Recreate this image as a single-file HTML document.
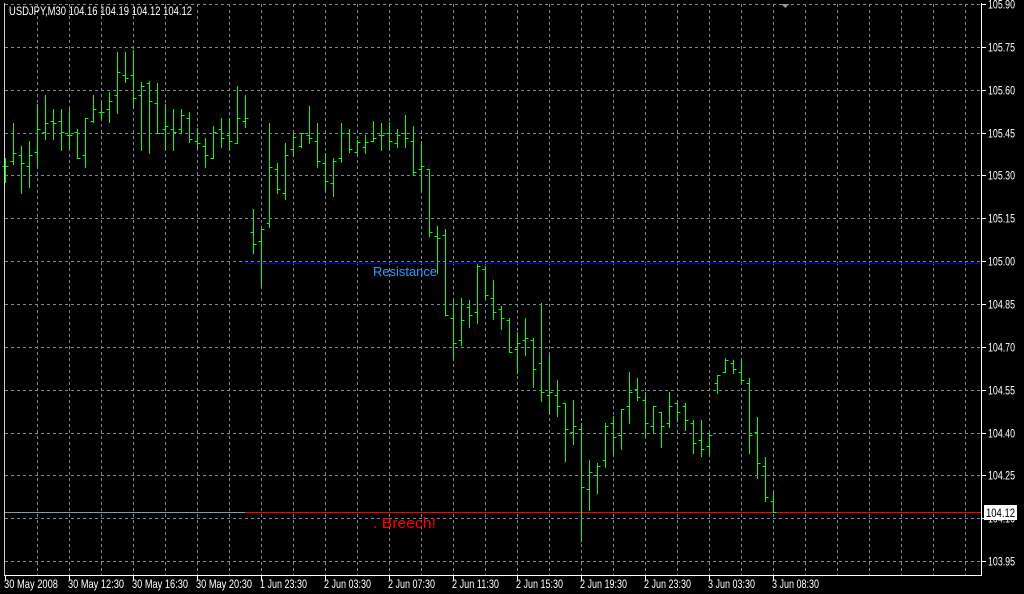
<!DOCTYPE html>
<html><head><meta charset="utf-8"><style>
html,body{margin:0;padding:0;background:#000;width:1024px;height:594px;overflow:hidden}
svg{display:block}
text{font-family:"Liberation Sans",sans-serif;font-size:12px;fill:#fff}
</style></head><body>
<svg id="c" width="1024" height="594" viewBox="0 0 1024 594" shape-rendering="crispEdges">
<rect width="1024" height="594" fill="#000"/>
<g id="grid" stroke="#77889a" stroke-width="1" stroke-dasharray="3,3"></g>
<line x1="245" y1="263.5" x2="982" y2="263.5" stroke="#0000cc"/>
<line x1="4" y1="512.5" x2="245" y2="512.5" stroke="#8899aa"/>
<line x1="245" y1="512.5" x2="982" y2="512.5" stroke="#ff0000"/>
<g id="bars" stroke="#00ff00" stroke-width="1"></g>
<polygon points="781,4 789,4 785,8" fill="#8899aa"/>
<line x1="4.5" y1="3" x2="4.5" y2="576" stroke="#ccc"/>
<line x1="981.5" y1="3" x2="981.5" y2="576" stroke="#fff"/>
<line x1="4" y1="575.5" x2="982" y2="575.5" stroke="#fff"/>
<g id="axis"></g>
<text x="9" y="15" textLength="183" lengthAdjust="spacingAndGlyphs">USDJPY,M30  104.16 104.19 104.12 104.12</text>
<text x="373" y="276" textLength="64" lengthAdjust="spacingAndGlyphs" style="fill:#3399ff;font-size:13px">Resistance</text>
<text x="373" y="528" textLength="63" lengthAdjust="spacingAndGlyphs" style="fill:#ff0000;font-size:15px">. Breech!</text>
<rect x="984" y="505" width="33" height="15" fill="#fff"/>
<text x="986" y="517" textLength="29" lengthAdjust="spacingAndGlyphs" style="fill:#000">104.12</text>
</svg>
<script>
var NS="http://www.w3.org/2000/svg";
function el(p,t,a,txt){var e=document.createElementNS(NS,t);for(var k in a)e.setAttribute(k,a[k]);if(txt)e.textContent=txt;p.appendChild(e);return e;}
var g=document.getElementById('grid'),ax=document.getElementById('axis'),b=document.getElementById('bars');
var prices=["105.90","105.75","105.60","105.45","105.30","105.15","105.00","104.85","104.70","104.55","104.40","104.25","104.10","103.95"];
for(var k=0;k<14;k++){var y=Math.round(4+42.85*k)+0.5;
 el(g,'line',{x1:5,y1:y,x2:981,y2:y});
 el(ax,'line',{x1:982,y1:y,x2:986,y2:y,stroke:'#fff'});
 el(ax,'text',{x:988,y:y+4,textLength:27,lengthAdjust:'spacingAndGlyphs'},prices[k]);
}
for(var x=37;x<982;x+=32){el(g,'line',{x1:x+0.5,y1:4,x2:x+0.5,y2:575});}
var labels=["30 May 2008","30 May 12:30","30 May 16:30","30 May 20:30","1 Jun 23:30","2 Jun 03:30","2 Jun 07:30","2 Jun 11:30","2 Jun 15:30","2 Jun 19:30","2 Jun 23:30","3 Jun 03:30","3 Jun 08:30"];
for(var i=0;i<labels.length;i++){var tx=5+64*i;var L=labels[i];
 var w=L.indexOf("May")>=0?(i==0?54:56):47;
 el(ax,'line',{x1:tx+0.5,y1:575,x2:tx+0.5,y2:580,stroke:'#fff'});
 el(ax,'text',{x:tx-1,y:588,textLength:w,lengthAdjust:'spacingAndGlyphs'},L);}
var d=[[158,182,166,166],[123,164,161,153],[146,193,155,163],[141,187,166,155],[104,166,152,129],[95,139,132,123],[109,139,121,123],[109,150,121,132],[109,148,135,135],[129,158,132,158],[118,167,155,118],[95,122,121,109],[103,119,112,112],[92,122,109,101],[52,113,95,72],[52,82,75,78],[50,107,75,98],[82,150,95,86],[81,153,83,101],[83,133,103,133],[104,149,129,126],[109,150,129,132],[109,133,129,115],[112,142,118,139],[128,148,141,143],[138,167,146,155],[126,158,158,132],[118,147,129,138],[118,150,135,141],[86,143,143,118],[95,127,121,118],
[209,253,232,244],[229,285,241,229],[123,227,223,167],[163,193,169,189],[143,199,193,155],[134,156,149,137],[133,147,146,133],[106,143,135,138],[123,167,141,161],[153,190,163,181],[158,196,183,161],[123,162,158,133],[129,152,133,149],[140,153,152,142],[135,153,147,142],[121,141,141,138],[123,150,135,135],[122,149,133,141],[129,147,143,135],[115,147,133,138],[126,175,141,172],[141,190,169,166],[169,236,169,232],[226,273,236,238],[229,315,235,315],[300,360,318,343],[298,345,340,320],[300,327,307,315],[264,323,312,266],[266,298,269,295],[280,319,298,312],
[306,329,309,318],[318,352,320,352],[332,373,349,343],[318,355,340,338],[338,387,340,369],[303,401,363,392],[355,413,395,392],[380,416,395,406],[403,461,403,429],[400,444,432,426],[423,541,429,487],[460,510,489,472],[463,493,475,466],[423,467,460,426],[416,454,423,437],[409,449,435,409],[372,423,406,392],[378,400,389,397],[392,437,400,423],[406,432,426,406],[412,447,412,426],[392,427,423,406],[403,421,403,412],[403,430,406,420],[420,453,423,443],[420,456,440,449],[433,454,446,435],[375,393,383,375],[358,372,372,360],[360,373,363,369],[360,383,372,380],[378,453,383,435],[417,478,432,463],[457,501,466,497],[492,512,501,512]];
for(var i=0;i<d.length;i++){var x=5+8*i+0.5,r=d[i];
 el(b,'line',{x1:x,y1:r[0],x2:x,y2:r[1]+1});
 el(b,'line',{x1:x-3,y1:r[2]+0.5,x2:x,y2:r[2]+0.5});
 el(b,'line',{x1:x,y1:r[3]+0.5,x2:x+3,y2:r[3]+0.5});}
</script>
</body></html>
